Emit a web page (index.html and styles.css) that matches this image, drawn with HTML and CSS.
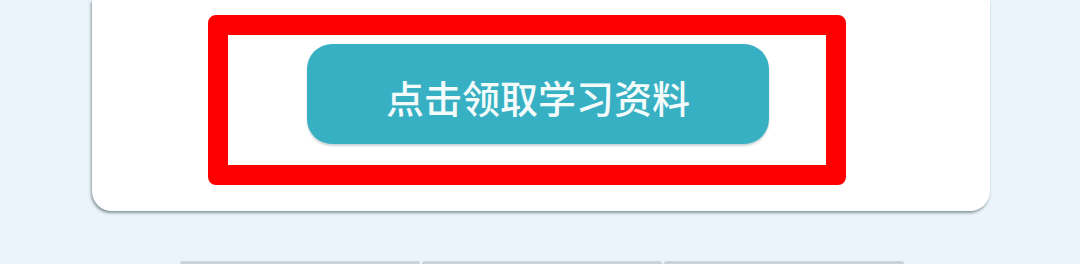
FILE: index.html
```html
<!DOCTYPE html>
<html>
    <head>
        <title>领取学习资料</title>
        <link rel="stylesheet" href="styles.css">
    </head>
    <body>
        <div class="card">
            <div class="highlight">
                <button class="getButton">点击领取学习资料</button>
            </div>
        </div>
        <div class="tabs">
            <div class="tab"></div>
            <div class="tab"></div>
            <div class="tab"></div>
        </div>
    </body>
</html>
```

FILE: styles.css
```css
body{
    margin: 0;
    background: #ebf4fb;
    font-family: "Noto Sans CJK SC", "Noto Sans", sans-serif;
    height: 264px;
    overflow: hidden;
}
.card{
    margin-left: 92px;
    width: 898px;
    box-sizing: border-box;
    background: #ffffff;
    padding: 15px 0 26px 116px;
    border-radius: 0 0 20px 20px;
    box-shadow: -1px 2px 3px rgba(70, 90, 90, 0.6);
}
.highlight{
    width: 638px;
    height: 170px;
    box-sizing: border-box;
    border: 20px solid #ff0000;
    border-radius: 8px;
    padding: 9px 0 0 79px;
}
.getButton{
    display: block;
    width: 462px;
    height: 100px;
    border: 0;
    border-radius: 25px;
    background: #37b0c3;
    color: #f4fbfb;
    font-family: inherit;
    font-size: 38px;
    font-weight: 500;
    padding: 4px 0 0 0;
    box-shadow: 0 2px 2px rgba(40, 90, 100, 0.25);
}
.tabs{
    display: flex;
    gap: 2px;
    margin: 50px 0 0 180px;
}
.tab{
    width: 240px;
    height: 0;
    border-top: 3px solid #c9d3d8;
    border-radius: 3px 3px 0 0;
}
```
